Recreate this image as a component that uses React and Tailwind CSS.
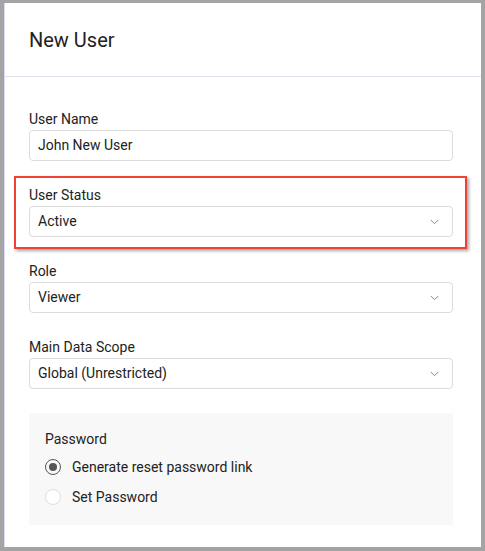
import React from 'react'

function Chevron() {
  return (
    <svg width="9" height="6" viewBox="0 0 9 6" fill="none" className="text-[#8a8a8a]">
      <path d="M0.75 0.9 L4.5 4.7 L8.25 0.9" stroke="currentColor" strokeWidth="1" />
    </svg>
  )
}

function Field({ label, value, select }) {
  return (
    <div className="flex flex-col">
      <label className="h-5 text-[14px] leading-5 text-[#222]">{label}</label>
      <div className="mt-px flex h-[31px] items-center justify-between rounded-[4px] border border-[#dcdcdc] bg-white pl-2 pr-[13px] text-[14px] text-[#222]">
        <span>{value}</span>
        {select && <Chevron />}
      </div>
    </div>
  )
}

function Radio({ checked, label }) {
  return (
    <div className="flex h-[30px] items-center gap-[11px]">
      {checked ? (
        <span className="flex h-4 w-4 items-center justify-center rounded-full border-[1.5px] border-[#555]">
          <span className="h-2 w-2 rounded-full bg-[#555]" />
        </span>
      ) : (
        <span className="h-4 w-4 rounded-full border border-[#dedede] bg-white" />
      )}
      <span className="text-[14px] text-[#222]">{label}</span>
    </div>
  )
}

export default function App() {
  return (
    <div className="flex h-[551px] w-[485px] bg-[#a4a4a4] pb-[4px] pl-[4px] pr-[4px] pt-[3px] font-['Roboto',sans-serif]">
      <div className="flex flex-1 flex-col border-l border-[#dcdaf0] bg-white">
        <div className="flex h-[74px] items-center border-b border-[#e4e1ef] pl-[24px]">
          <h1 className="text-[20px] text-[#222]">New User</h1>
        </div>

        <div className="flex flex-col gap-[24px] pl-[24px] pr-[28px] pt-[32px]">
          <Field label="User Name" value="John New User" />

          <div className="relative">
            <Field label="User Status" value="Active" select />
            <div className="pointer-events-none absolute -bottom-[12px] -left-[15px] -right-[14px] -top-[9px] border-2 border-[#ef4136] shadow-[2px_2px_3px_rgba(0,0,0,0.35)]" />
          </div>

          <Field label="Role" value="Viewer" select />
          <Field label="Main Data Scope" value="Global (Unrestricted)" select />

          <div className="flex flex-col bg-[#f8f8f8] pb-[13px] pl-[16px] pt-[16px]">
            <span className="mb-[3px] h-5 text-[14px] leading-5 text-[#222]">Password</span>
            <Radio checked label="Generate reset password link" />
            <Radio label="Set Password" />
          </div>
        </div>
      </div>
    </div>
  )
}
